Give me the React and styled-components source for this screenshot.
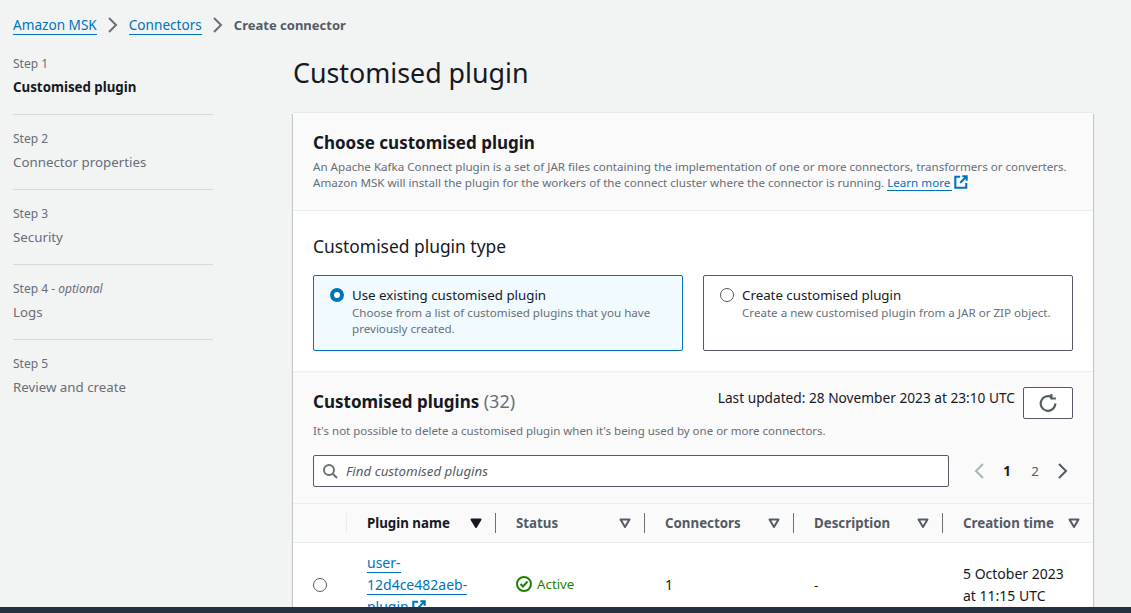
import React from 'react';
import styled, { createGlobalStyle } from 'styled-components';

const GlobalStyle = createGlobalStyle`
  html, body {
    margin: 0;
    height: 100%;
    overflow: hidden;
    background: #f2f3f3;
  }
  body {
    font-family: "Noto Sans", "Open Sans", sans-serif;
    font-size: 13.3px;
    line-height: 20px;
    color: #16191f;
  }
`;

const Page = styled.div`
  height: 613px;
  overflow: hidden;
  padding: 15px 38px 0 13px;
  box-sizing: border-box;
`;

const Breadcrumbs = styled.nav`
  display: flex;
  align-items: center;
  height: 20px;
`;

const CrumbLink = styled.a`
  color: #0073bb;
  border-bottom: 1px solid #0073bb;
  font-size: 13.6px;
  line-height: 18px;
  margin-top: 1px;
`;

const CrumbCurrent = styled.span`
  color: #545b64;
  font-size: 13px;
  font-weight: 700;
`;

const CrumbArrow = styled.svg`
  width: 16px;
  height: 16px;
  margin: 0 8px;
  fill: none;
  stroke: #687078;
  stroke-width: 2;
`;

const Columns = styled.div`
  display: grid;
  grid-template-columns: 200px 800px;
  column-gap: 80px;
`;

const StepList = styled.ol`
  list-style: none;
  margin: 0;
  padding: 21px 0 0;
`;

const StepItem = styled.li`
  padding-bottom: 12px;
  margin-bottom: 16px;
  border-bottom: ${(p) => (p.$last ? 'none' : '1px solid #d5dbdb')};
`;

const StepNumber = styled.div`
  font-size: 12px;
  line-height: 16px;
  color: #666e78;
  margin-bottom: 5px;
  em {
    font-style: italic;
  }
`;

const StepLabel = styled.div`
  color: ${(p) => (p.$active ? '#16191f' : '#666e78')};
  font-weight: ${(p) => (p.$active ? 700 : 400)};
  height: 25px;
`;

const Main = styled.main`
  min-width: 0;
`;

const Title = styled.h1`
  margin: 0;
  padding-top: 20px;
  height: 78px;
  box-sizing: border-box;
  font-size: 26.8px;
  line-height: 36px;
  font-weight: 400;
  color: #16191f;
`;

const Card = styled.section`
  background: #fff;
  box-shadow: 0 -1px 0 0 #e6e9e9, 0 1px 1px 0 rgba(0, 28, 36, 0.3), 1px 1px 1px 0 rgba(0, 28, 36, 0.15), -1px 1px 1px 0 rgba(0, 28, 36, 0.15);
`;

const CardHeader = styled.header`
  background: #fafafa;
  border-bottom: 1px solid #eaeded;
  padding: 19px 20px 0;
  height: 98px;
  box-sizing: border-box;
`;

const CardTitle = styled.h2`
  margin: 0;
  font-size: 17px;
  line-height: 22px;
  font-weight: 700;
  color: #16191f;
`;

const CardDesc = styled.p`
  margin: 5px 0 0;
  font-size: 11.6px;
  line-height: 16px;
  color: #666e78;
  white-space: nowrap;
`;

const LearnLink = styled.a`
  color: #0073bb;
  border-bottom: 1px solid #0073bb;
  padding-right: 2px;
  margin-right: 2px;
`;

const ExternalIcon = styled.svg`
  width: ${(p) => p.$size}px;
  height: ${(p) => p.$size}px;
  vertical-align: -2px;
  fill: none;
  stroke: #0073bb;
  stroke-width: 2.4;
`;

const CardBody = styled.div`
  padding: 23px 20px 20px;
  height: 160px;
  box-sizing: border-box;
`;

const SectionHeading = styled.h3`
  margin: 0 0 17px;
  font-size: 17.4px;
  line-height: 24px;
  font-weight: 400;
  color: #16191f;
`;

const Tiles = styled.div`
  display: grid;
  grid-template-columns: 370px 370px;
  column-gap: 20px;
`;

const Tile = styled.label`
  display: flex;
  gap: 8px;
  height: 76px;
  box-sizing: border-box;
  padding: 9px 16px;
  border: 1px solid ${(p) => (p.$selected ? '#0073bb' : '#545b64')};
  border-radius: 2px;
  background: ${(p) => (p.$selected ? '#f1faff' : '#fff')};
`;

const Radio = styled.span`
  flex: none;
  width: 14px;
  height: 14px;
  margin-top: 3px;
  border-radius: 50%;
  box-sizing: border-box;
  border: ${(p) => (p.$checked ? '4px solid #0073bb' : '1px solid #545b64')};
  background: #fff;
`;

const TileText = styled.span`
  display: block;
`;

const TileTitle = styled.span`
  display: block;
  line-height: 20px;
  color: #16191f;
`;

const TileDesc = styled.span`
  display: block;
  font-size: 11.6px;
  line-height: 16px;
  color: #687078;
`;

const TableSection = styled.div`
  background: #fafafa;
  border-top: 1px solid #eaeded;
`;

const TableTop = styled.div`
  padding: 15px 20px 16px;
`;

const TableTitleRow = styled.div`
  display: flex;
  justify-content: space-between;
  align-items: flex-start;
  height: 36px;
`;

const TableTitle = styled.h2`
  margin: 3px 0 0;
  font-size: 17px;
  line-height: 22px;
  font-weight: 700;
  span {
    font-size: 18px;
    font-weight: 400;
    color: #687078;
  }
`;

const Updated = styled.div`
  display: flex;
  gap: 8px;
  font-size: 13.7px;
  line-height: 22px;
  color: #16191f;
`;

const RefreshButton = styled.button`
  width: 50px;
  height: 32px;
  padding: 0;
  display: flex;
  align-items: center;
  justify-content: center;
  background: #fff;
  border: 1px solid #545b64;
  border-radius: 2px;
`;

const TableDesc = styled.p`
  margin: 0;
  height: 27px;
  font-size: 11.5px;
  line-height: 16px;
  color: #666e78;
`;

const FilterRow = styled.div`
  display: flex;
  align-items: center;
  justify-content: space-between;
  margin-top: 5px;
`;

const SearchBox = styled.div`
  display: flex;
  align-items: center;
  gap: 8px;
  width: 636px;
  height: 32px;
  box-sizing: border-box;
  padding: 0 8px;
  background: #fff;
  border: 1px solid #545b64;
  border-radius: 2px;
  font-style: italic;
  color: #545b64;
`;

const Pager = styled.div`
  display: flex;
  align-items: center;
  gap: 12px;
  padding-right: 2px;
`;

const PageNumber = styled.span`
  width: 16px;
  text-align: center;
  font-weight: ${(p) => (p.$current ? 700 : 400)};
  color: ${(p) => (p.$current ? '#16191f' : '#545b64')};
`;

const PagerArrow = styled.svg`
  width: 16px;
  height: 16px;
  fill: none;
  stroke: ${(p) => (p.$disabled ? '#aab7b8' : '#545b64')};
  stroke-width: 2;
`;

const HeaderRow = styled.div`
  display: grid;
  grid-template-columns: 53px repeat(4, 149px) 151px;
  height: 40px;
  box-sizing: border-box;
  border-top: 1px solid #eaeded;
  border-bottom: 1px solid #eaeded;
  background: #fafafa;
  align-items: center;
`;

const HeaderCell = styled.div`
  display: flex;
  align-items: center;
  justify-content: space-between;
  height: 20px;
  padding: 0 13px 0 20px;
  font-weight: 700;
  color: ${(p) => (p.$sorted ? '#16191f' : '#545b64')};
  border-left: 1px solid ${(p) => (p.$lead ? '#eaeded' : '#687078')};
`;

const SelectHead = styled.div``;

const SortIcon = styled.svg`
  width: 12px;
  height: 12px;
  stroke: ${(p) => (p.$sorted ? '#16191f' : '#545b64')};
  stroke-width: 2;
  stroke-linejoin: round;
  fill: ${(p) => (p.$sorted ? '#16191f' : 'none')};
`;

const BodyRow = styled.div`
  display: grid;
  grid-template-columns: 53px repeat(4, 149px) 151px;
  background: #fff;
  align-items: center;
  height: 84px;
  color: #16191f;
`;

const BodyCell = styled.div`
  padding: 0 8px 0 21px;
`;

const DateText = styled.span`
  display: block;
  font-size: 14px;
  line-height: 22px;
  color: #16191f;
`;

const RadioCell = styled.div`
  display: flex;
  padding-left: 20px;
  span {
    margin-top: 0;
  }
`;

const PluginLink = styled.a`
  color: #0073bb;
  font-size: 14px;
  line-height: 22px;
  display: block;
  span {
    border-bottom: 1px solid #0073bb;
  }
`;

const StatusOk = styled.span`
  display: inline-flex;
  align-items: center;
  gap: 5px;
  color: #1d8102;
`;

const BottomBar = styled.div`
  position: fixed;
  left: 0;
  right: 0;
  bottom: 0;
  height: 6px;
  background: #232f3e;
`;

const steps = [
  { num: 'Step 1', label: 'Customised plugin', active: true },
  { num: 'Step 2', label: 'Connector properties' },
  { num: 'Step 3', label: 'Security' },
  { num: 'Step 4', optional: true, label: 'Logs' },
  { num: 'Step 5', label: 'Review and create', last: true },
];

const columns = ['Status', 'Connectors', 'Description', 'Creation time'];

const Chevron = ({ left, as: Comp = CrumbArrow, ...rest }) => (
  <Comp viewBox="0 0 16 16" {...rest}>
    <path d={left ? 'M12 1 5 8l7 7' : 'M4 1l7 7-7 7'} />
  </Comp>
);

const External = ({ size }) => (
  <ExternalIcon $size={size} viewBox="0 0 16 16">
    <path d="M7 2H1.5v12.5H14V9" />
    <path d="M9.5 1.5h5v5M14.5 1.5 7 9" />
  </ExternalIcon>
);

const Sort = ({ sorted }) => (
  <SortIcon $sorted={sorted} viewBox="0 0 12 12">
    <path d="M1.5 2.5h9L6 10z" />
  </SortIcon>
);

export default function App() {
  return (
    <>
      <GlobalStyle />
      <Page>
        <Breadcrumbs>
          <CrumbLink>Amazon MSK</CrumbLink>
          <Chevron />
          <CrumbLink>Connectors</CrumbLink>
          <Chevron />
          <CrumbCurrent>Create connector</CrumbCurrent>
        </Breadcrumbs>
        <Columns>
          <StepList>
            {steps.map((s) => (
              <StepItem key={s.num} $last={s.last}>
                <StepNumber>
                  {s.num}
                  {s.optional && <> - <em>optional</em></>}
                </StepNumber>
                <StepLabel $active={s.active}>{s.label}</StepLabel>
              </StepItem>
            ))}
          </StepList>
          <Main>
            <Title>Customised plugin</Title>
            <Card>
              <CardHeader>
                <CardTitle>Choose customised plugin</CardTitle>
                <CardDesc>
                  An Apache Kafka Connect plugin is a set of JAR files containing the implementation of one or more connectors, transformers or converters.
                  <br />
                  Amazon MSK will install the plugin for the workers of the connect cluster where the connector is running.{' '}
                  <LearnLink>Learn more</LearnLink>
                  <External size={14} />
                </CardDesc>
              </CardHeader>
              <CardBody>
                <SectionHeading>Customised plugin type</SectionHeading>
                <Tiles>
                  <Tile $selected>
                    <Radio $checked />
                    <TileText>
                      <TileTitle>Use existing customised plugin</TileTitle>
                      <TileDesc>Choose from a list of customised plugins that you have previously created.</TileDesc>
                    </TileText>
                  </Tile>
                  <Tile>
                    <Radio />
                    <TileText>
                      <TileTitle>Create customised plugin</TileTitle>
                      <TileDesc>Create a new customised plugin from a JAR or ZIP object.</TileDesc>
                    </TileText>
                  </Tile>
                </Tiles>
              </CardBody>
              <TableSection>
                <TableTop>
                  <TableTitleRow>
                    <TableTitle>Customised plugins <span>(32)</span></TableTitle>
                    <Updated>
                      Last updated: 28 November 2023 at 23:10 UTC
                      <RefreshButton>
                        <svg width="18" height="18" viewBox="0 0 16 16" fill="none" stroke="#545b64" strokeWidth="1.9">
                          <path d="M14.5 8.5A6.5 6.5 0 1 1 11.5 3" />
                          <path d="M11 0v4h4" />
                        </svg>
                      </RefreshButton>
                    </Updated>
                  </TableTitleRow>
                  <TableDesc>It's not possible to delete a customised plugin when it's being used by one or more connectors.</TableDesc>
                  <FilterRow>
                    <SearchBox>
                      <svg width="16" height="16" viewBox="0 0 16 16" fill="none" stroke="#687078" strokeWidth="2">
                        <circle cx="7" cy="7" r="5" />
                        <path d="M10.5 10.5 15 15" />
                      </svg>
                      Find customised plugins
                    </SearchBox>
                    <Pager>
                      <Chevron left as={PagerArrow} $disabled />
                      <PageNumber $current>1</PageNumber>
                      <PageNumber>2</PageNumber>
                      <Chevron as={PagerArrow} />
                    </Pager>
                  </FilterRow>
                </TableTop>
                <HeaderRow>
                  <SelectHead />
                  <HeaderCell $sorted $lead>
                    Plugin name
                    <Sort sorted />
                  </HeaderCell>
                  {columns.map((c) => (
                    <HeaderCell key={c}>
                      {c}
                      <Sort />
                    </HeaderCell>
                  ))}
                </HeaderRow>
                <BodyRow>
                  <RadioCell><Radio /></RadioCell>
                  <BodyCell>
                    <PluginLink>
                      <span>user-</span>
                      <br />
                      <span>12d4ce482aeb-</span>
                      <br />
                      plugin <External size={14} />
                    </PluginLink>
                  </BodyCell>
                  <BodyCell>
                    <StatusOk>
                      <svg width="16" height="16" viewBox="0 0 16 16" fill="none" stroke="#1d8102" strokeWidth="2">
                        <circle cx="8" cy="8" r="7" />
                        <path d="M4.5 8l2.5 2.5 4.5-5" />
                      </svg>
                      Active
                    </StatusOk>
                  </BodyCell>
                  <BodyCell><DateText>1</DateText></BodyCell>
                  <BodyCell>-</BodyCell>
                  <BodyCell>
                    <DateText>5 October 2023</DateText>
                    <DateText>at 11:15 UTC</DateText>
                  </BodyCell>
                </BodyRow>
              </TableSection>
            </Card>
          </Main>
        </Columns>
      </Page>
      <BottomBar />
    </>
  );
}
